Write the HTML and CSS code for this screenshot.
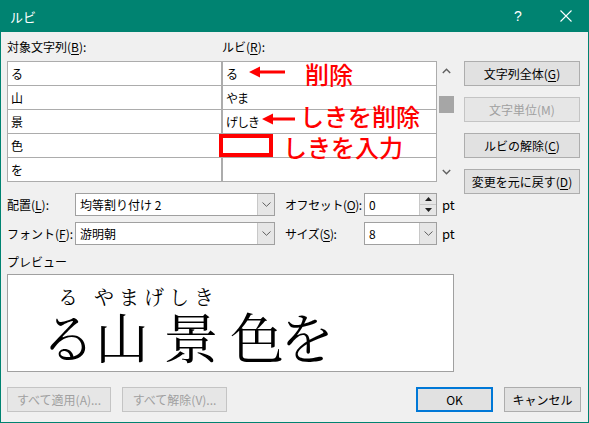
FILE: index.html
```html
<!DOCTYPE html>
<html lang="ja">
<head>
<meta charset="utf-8">
<link rel="stylesheet" href="styles.css">
</head>
<body>
<div class="window">
  <div class="titlebar">
    <span class="title">ルビ</span>
    <span class="help">?</span>
    <span class="close"><svg width="12" height="12" viewBox="0 0 12 12"><path d="M0.5 0.5L11.5 11.5M11.5 0.5L0.5 11.5" stroke="#fff" stroke-width="1.1"/></svg></span>
  </div>
  <div class="content">
    <div class="main">
      <div class="leftcol">
        <div class="labels">
          <span class="lab-base">対象文字列(<u>B</u>):</span>
          <span class="lab-ruby">ルビ(<u>R</u>):</span>
        </div>
        <div class="gridwrap">
          <div class="grid">
            <div class="cell">る</div><div class="cell">る</div>
            <div class="cell">山</div><div class="cell">やま</div>
            <div class="cell">景</div><div class="cell">げしき</div>
            <div class="cell">色</div><div class="cell"></div>
            <div class="cell">を</div><div class="cell"></div>
          </div>
          <div class="scrollbar">
            <div class="sb-arrow"><svg width="9" height="6" viewBox="0 0 9 6"><path d="M0.8 5L4.5 1.3L8.2 5" fill="none" stroke="#606060" stroke-width="1.4"/></svg></div>
            <div class="sb-thumb"></div>
            <div class="sb-track"></div>
            <div class="sb-arrow"><svg width="9" height="6" viewBox="0 0 9 6"><path d="M0.8 1L4.5 4.7L8.2 1" fill="none" stroke="#606060" stroke-width="1.4"/></svg></div>
          </div>
          <svg class="arrow arrow1" width="36" height="12" viewBox="0 0 36 12"><path d="M0 6L11 0.5V4.5H36V7.5H11V11.5Z" fill="#ff0000"/></svg>
          <span class="note note1">削除</span>
          <svg class="arrow arrow2" width="33" height="12" viewBox="0 0 33 12"><path d="M0 6L11 0.5V4.5H33V7.5H11V11.5Z" fill="#ff0000"/></svg>
          <span class="note note2">しきを削除</span>
          <div class="redbox"></div>
          <span class="note note3">しきを入力</span>
        </div>
        <div class="options">
          <div class="opt-row">
            <span class="opt-label">配置(<u>L</u>):</span>
            <div class="combo"><span class="combo-text">均等割り付け 2</span><span class="combo-btn"><svg width="9" height="5" viewBox="0 0 9 5"><path d="M0.5 0.5L4.5 4.3L8.5 0.5" fill="none" stroke="#606060" stroke-width="1"/></svg></span></div>
            <span class="opt-label2">オフセット(<u>O</u>):</span>
            <div class="spin"><span class="combo-text">0</span><span class="spin-btns"><span class="spin-up"><svg width="7" height="4" viewBox="0 0 7 4"><path d="M0 4L3.5 0L7 4Z" fill="#202020"/></svg></span><span class="spin-down"><svg width="7" height="4" viewBox="0 0 7 4"><path d="M0 0L3.5 4L7 0Z" fill="#202020"/></svg></span></span></div>
            <span class="unit">pt</span>
          </div>
          <div class="opt-row row2">
            <span class="opt-label">フォント(<u>F</u>):</span>
            <div class="combo"><span class="combo-text">游明朝</span><span class="combo-btn"><svg width="9" height="5" viewBox="0 0 9 5"><path d="M0.5 0.5L4.5 4.3L8.5 0.5" fill="none" stroke="#606060" stroke-width="1"/></svg></span></div>
            <span class="opt-label2">サイズ(<u>S</u>):</span>
            <div class="spin"><span class="combo-text">8</span><span class="combo-btn"><svg width="9" height="5" viewBox="0 0 9 5"><path d="M0.5 0.5L4.5 4.3L8.5 0.5" fill="none" stroke="#606060" stroke-width="1"/></svg></span></div>
            <span class="unit">pt</span>
          </div>
        </div>
        <div class="pv-label">プレビュー</div>
        <div class="preview">
          <div class="pv-ruby"><span class="rb1">る</span><span class="rb2">やまげしき</span></div>
          <div class="pv-base"><span class="b1">る</span><span class="b2">山</span><span class="b3">景</span><span class="b4">色</span><span class="b5">を</span></div>
        </div>
      </div>
      <div class="rightcol">
        <div class="btn">文字列全体(<u>G</u>)</div>
        <div class="btn disabled">文字単位(M)</div>
        <div class="btn">ルビの解除(<u>C</u>)</div>
        <div class="btn">変更を元に戻す(<u>D</u>)</div>
      </div>
    </div>
    <div class="footer">
      <div class="btn disabled fb1">すべて適用(A)...</div>
      <div class="btn disabled fb2">すべて解除(V)...</div>
      <div class="btn default fb3">OK</div>
      <div class="btn fb4">キャンセル</div>
    </div>
  </div>
</div>
</body>
</html>
```
FILE: styles.css
```css
* { box-sizing: border-box; }
html, body { margin: 0; padding: 0; }
body {
  width: 589px;
  height: 423px;
  overflow: hidden;
  background: #f0f0f0;
  font-family: "Noto Sans CJK JP", "Noto Sans", sans-serif;
  font-size: 12px;
  color: #000;
}
u { text-decoration: underline; text-underline-offset: 2px; }
.window {
  width: 589px;
  height: 423px;
  border: 1px solid #008371;
  border-top: 0;
  display: flex;
  flex-direction: column;
}
.titlebar {
  height: 32px;
  flex: none;
  background: #008371;
  color: #fff;
  display: flex;
  align-items: center;
  padding-left: 9px;
  padding-right: 12px;
}
.title { font-size: 13px; }
.help {
  margin-left: auto;
  width: 20px;
  text-align: center;
  font-size: 14px;
  font-family: "Liberation Sans", sans-serif;
}
.close {
  margin-left: 28px;
  width: 20px;
  display: flex;
  justify-content: center;
}
.content {
  padding: 0 7px 0 6px;
  display: flex;
  flex-direction: column;
}
.main { display: flex; }
.leftcol { width: 448px; display: flex; flex-direction: column; }
.rightcol {
  width: 116px;
  margin-left: 9px;
  padding-top: 29px;
  display: flex;
  flex-direction: column;
  gap: 11px;
}
.labels { height: 29px; display: flex; align-items: center; }
.lab-base { width: 215px; }
.gridwrap { position: relative; display: flex; }
.grid {
  width: 430px;
  display: grid;
  grid-template-columns: 213px 213px;
  column-gap: 2px;
  row-gap: 1px;
  padding: 1px;
  background: #acacac;
}
.cell {
  background: #fff;
  height: 23px;
  line-height: 23px;
  padding-left: 3px;
  letter-spacing: -1px;
}
.scrollbar {
  width: 18px;
  display: flex;
  flex-direction: column;
  align-items: center;
}
.sb-arrow { height: 20px; display: flex; align-items: center; justify-content: center; }
.sb-thumb { width: 15px; height: 17px; margin-top: 15px; background: #a6a6a6; }
.sb-track { flex: 1; }
.arrow { position: absolute; }
.arrow1 { left: 242px; top: 5px; }
.arrow2 { left: 255px; top: 52px; }
.note {
  position: absolute;
  color: #ff0000;
  font-size: 24px;
  line-height: 24px;
  font-weight: 500;
  white-space: nowrap;
}
.note1 { left: 298px; top: 1px; }
.note2 { left: 293px; top: 43px; }
.note3 { left: 276px; top: 74px; }
.redbox {
  position: absolute;
  left: 212px;
  top: 73px;
  width: 54px;
  height: 23px;
  border: 4px solid #ff0000;
  background: #fff;
}
.options { margin-top: 11px; }
.opt-row { display: flex; align-items: center; height: 23px; }
.row2 { margin-top: 6px; }
.opt-label { width: 68px; white-space: nowrap; }
.opt-label2 { width: 79px; margin-left: 10px; white-space: nowrap; letter-spacing: -0.4px; }
.combo, .spin {
  height: 23px;
  border: 1px solid #a0a0a0;
  background: #fff;
  display: flex;
  flex: none;
}
.combo { width: 200px; }
.spin { width: 73px; }
.combo-text { flex: 1; padding-left: 4px; line-height: 21px; }
.combo-btn {
  width: 17px;
  background: #e6e6e6;
  border-left: 1px solid #c8c8c8;
  display: flex;
  align-items: center;
  justify-content: center;
}
.spin-btns {
  width: 17px;
  display: flex;
  flex-direction: column;
  border-left: 1px solid #c8c8c8;
}
.spin-up, .spin-down {
  flex: 1;
  background: #e6e6e6;
  display: flex;
  align-items: center;
  justify-content: center;
}
.spin-up { border-bottom: 1px solid #c8c8c8; }
.unit { margin-left: 5px; font-size: 13px; }
.pv-label { margin-top: 9px; height: 16px; line-height: 16px; margin-bottom: 4px; }
.preview {
  width: 447px;
  height: 98px;
  border: 1px solid #a0a0a0;
  background: #fff;
  padding-top: 10px;
  font-family: "Noto Serif CJK JP", "Noto Sans CJK JP", serif;
  font-weight: 400;
}
.pv-ruby { display: flex; height: 24px; line-height: 24px; font-size: 20px; }
.rb1 { margin-left: 50px; }
.rb2 { margin-left: 16px; letter-spacing: 5px; }
.pv-base { display: flex; height: 54px; line-height: 54px; font-size: 54px; }
.b1 { margin-left: 33px; }
.b3 { margin-left: 15px; }
.b4 { margin-left: 12px; }
.b5 { margin-left: -4px; }
.btn {
  height: 25px;
  background: #e1e1e1;
  border: 1px solid #adadad;
  display: flex;
  align-items: center;
  justify-content: center;
  white-space: nowrap;
}
.btn.disabled {
  color: #a0a0a0;
  border-color: #c4c4c4;
  background: #e6e6e6;
}
.btn.default { border: 2px solid #0078d7; }
.footer { display: flex; margin-top: 15px; }
.fb1 { width: 104px; }
.fb2 { width: 105px; margin-left: 11px; }
.fb3 { width: 77px; margin-left: auto; }
.fb4 { width: 77px; margin-left: 11px; }
```
